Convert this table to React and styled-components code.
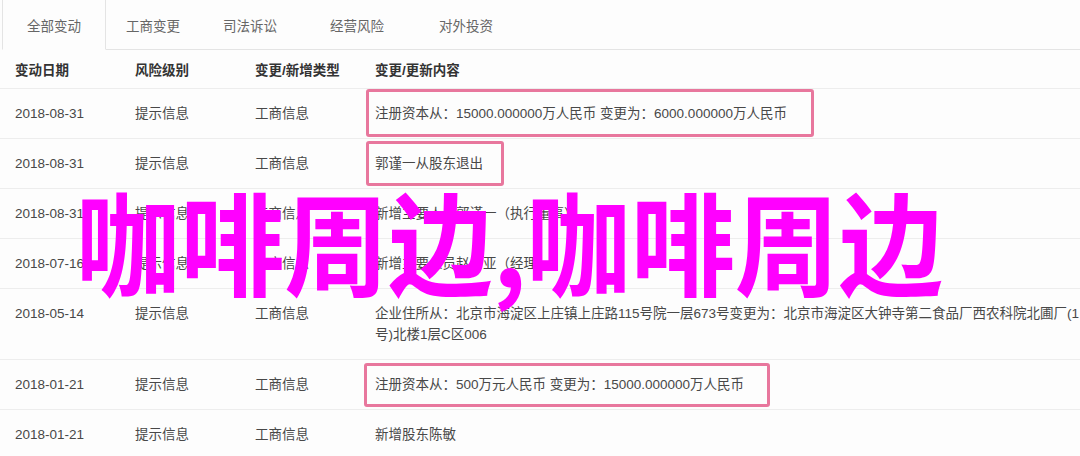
import React from 'react';
import styled, { createGlobalStyle } from 'styled-components';

const GlobalStyle = createGlobalStyle`
    html, body {
        margin: 0;
        padding: 0;
        background: #fdfdfd;
        overflow: hidden;
    }
    body {
        font-family: "Liberation Sans", "Noto Sans CJK SC", sans-serif;
        color: #444;
    }
`;

const tabs = [
    { label: '全部变动', w: 104, active: true },
    { label: '工商变更', w: 94 },
    { label: '司法诉讼', w: 100 },
    { label: '经营风险', w: 114 },
    { label: '对外投资', w: 104 },
];

const rows = [
    { date: '2018-08-31', content: '注册资本从：15000.000000万人民币 变更为：6000.000000万人民币', mark: { t: 14, b: 13, l: 9, r: 27 } },
    { date: '2018-08-31', content: '郭谨一从股东退出', mark: { t: 12, b: 12, l: 9, r: 21 } },
    { date: '2018-08-31', content: '新增主要人员郭谨一（执行董事）' },
    { date: '2018-07-16', content: '新增主要人员赵公亚（经理）' },
    { date: '2018-05-14', content: ['企业住所从：北京市海淀区上庄镇上庄路115号院一层673号变更为：北京市海淀区大钟寺第二食品厂西农科院北圃厂(1', '号)北楼1层C区006'] },
    { date: '2018-01-21', content: '注册资本从：500万元人民币 变更为：15000.000000万人民币', mark: { t: 11, b: 12, l: 11, r: 26 } },
    { date: '2018-01-21', content: '新增股东陈敏' },
];

export default function App() {
    return (
        <>
        <GlobalStyle />
        <Page>
            <TabBar>
                {tabs.map(t => (
                    <Tab key={t.label} $w={t.w} $active={t.active}>{t.label}</Tab>
                ))}
                <TabRest />
            </TabBar>
            <HeadRow>
                <HeadCell>变动日期</HeadCell>
                <HeadCell>风险级别</HeadCell>
                <HeadCell>变更/新增类型</HeadCell>
                <HeadCell>变更/更新内容</HeadCell>
            </HeadRow>
            {rows.map((r, i) => (
                <Row key={i}>
                    <Cell>{r.date}</Cell>
                    <Cell>提示信息</Cell>
                    <Cell>工商信息</Cell>
                    <Cell>
                        {r.mark ? (
                            <Mark $t={r.mark.t} $b={r.mark.b} $l={r.mark.l} $r={r.mark.r}>{r.content}</Mark>
                        ) : Array.isArray(r.content) ? (
                            r.content.map((line, j) => <Line key={j}>{line}</Line>)
                        ) : r.content}
                    </Cell>
                </Row>
            ))}
            <Stamp>咖啡周边,咖啡周边</Stamp>
        </Page>
        </>
    );
}

const Page = styled.div`
    position: relative;
    width: 1200px;
    height: 456px;
    overflow: hidden;
    font-size: 13.5px;
`;

const TabBar = styled.div`
    display: flex;
    height: 50px;
    padding-left: 2px;
`;

const Tab = styled.div`
    flex: none;
    width: ${p => p.$w}px;
    display: flex;
    align-items: center;
    justify-content: center;
    color: #666;
    background: #fdfdfd;
    box-sizing: border-box;
    border-bottom: 1px solid ${p => p.$active ? 'transparent' : '#e4e4e4'};
    border-left: ${p => p.$active ? '1px solid #e4e4e4' : 'none'};
    border-right: ${p => p.$active ? '1px solid #e4e4e4' : 'none'};
`;

const TabRest = styled.div`
    flex: 1;
    border-bottom: 1px solid #e4e4e4;
`;

const grid = `
    display: grid;
    grid-template-columns: 120px 120px 120px 1fr;
    padding-left: 15px;
    border-bottom: 1px solid #ededed;
`;

const HeadRow = styled.div`
    ${grid}
    height: 38px;
    align-items: center;
`;

const HeadCell = styled.div`
    font-weight: bold;
    color: #333;
`;

const Row = styled.div`
    ${grid}
    padding-top: 14px;
    padding-bottom: 14px;
    line-height: 21px;
`;

const Cell = styled.div`
    color: #484848;
    white-space: nowrap;
`;

const Line = styled.div``;

const Mark = styled.span`
    position: relative;
    display: inline-block;
    &::after {
        content: '';
        position: absolute;
        top: -${p => p.$t}px;
        bottom: -${p => p.$b}px;
        left: -${p => p.$l}px;
        right: -${p => p.$r}px;
        border: 3px solid #e8779d;
        border-radius: 3px;
    }
`;

const Stamp = styled.div`
    position: absolute;
    left: 76px;
    top: 183px;
    font-family: "Noto Sans CJK SC", sans-serif;
    font-weight: bold;
    font-size: 112px;
    line-height: 1;
    color: #ff00ff;
    white-space: nowrap;
    transform: scaleX(0.93);
    transform-origin: left top;
    pointer-events: none;
`;
